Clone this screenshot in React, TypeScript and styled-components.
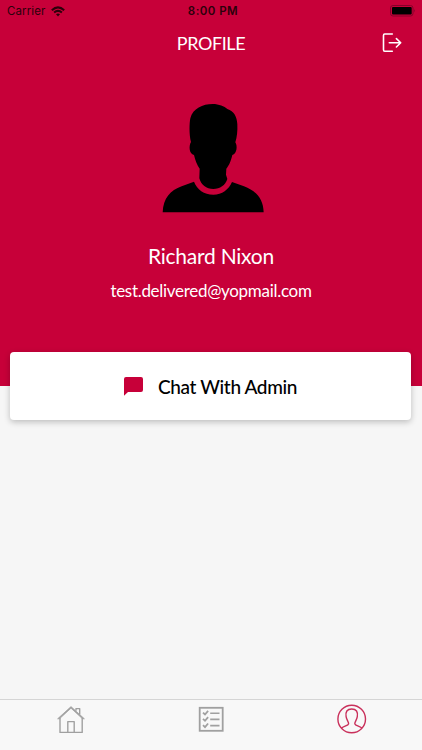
import React from "react";
import styled, { createGlobalStyle } from "styled-components";

const GlobalStyle = createGlobalStyle`
  * { box-sizing: border-box; }
  body { margin: 0; background: #f6f6f6; font-family: Lato, sans-serif; }
`;

const Screen = styled.main`
  width: 422px;
  height: 750px;
  display: flex;
  flex-direction: column;
  background: #f6f6f6;
  overflow: hidden;
`;

const Hero = styled.section`
  height: 386px;
  flex: none;
  display: flex;
  flex-direction: column;
  background: #c70039;
`;

const StatusBar = styled.div`
  height: 22px;
  flex: none;
  display: grid;
  grid-template-columns: 1fr auto 1fr;
  align-items: center;
  padding: 0 6px 0 7px;
  font-family: Inter, sans-serif;
  font-size: 11.5px;
  color: #2c000b;
`;

const Carrier = styled.span`
  display: flex;
  align-items: center;
  gap: 6px;
  letter-spacing: 0.1px;
`;

const Clock = styled.span`
  padding-left: 3px;
  font-weight: 600;
  font-size: 11.5px;
  letter-spacing: 0.45px;
`;

const BatterySlot = styled.span`
  display: flex;
  justify-content: flex-end;
`;

const NavBar = styled.header`
  height: 42px;
  flex: none;
  display: grid;
  grid-template-columns: 1fr auto 1fr;
  align-items: center;
  padding: 0 20px;
`;

const Title = styled.h1`
  grid-column: 2;
  margin: 0;
  padding-bottom: 1px;
  font-size: 18px;
  font-weight: 400;
  letter-spacing: -0.4px;
  color: #fff;
`;

const LogoutButton = styled.button`
  justify-self: end;
  display: flex;
  padding: 0;
  border: 0;
  background: none;
`;

const Person = styled.div`
  display: flex;
  flex-direction: column;
  align-items: center;
  padding-top: 31px;
  color: #fff;
`;

const Name = styled.h2`
  margin: 23px 0 0;
  font-size: 21px;
  line-height: 26px;
  font-weight: 400;
  letter-spacing: -0.25px;
`;

const Email = styled.p`
  margin: 11px 0 0;
  font-size: 17px;
  line-height: 22px;
  letter-spacing: -0.3px;
`;

const ChatCard = styled.button`
  margin: -34px 11px 0 10px;
  height: 68px;
  flex: none;
  display: flex;
  align-items: center;
  justify-content: center;
  gap: 15px;
  padding: 1px 0 0;
  border: 0;
  border-radius: 4px;
  background: #fff;
  box-shadow: 0 2px 6px rgba(0, 0, 0, 0.24);
  color: #000;
  font: 500 19px/24px Lato, sans-serif;
  letter-spacing: -0.35px;
`;

const TabBar = styled.nav`
  margin-top: auto;
  height: 51px;
  display: grid;
  grid-template-columns: repeat(3, 1fr);
  border-top: 1px solid #d5d5d5;
  background: #f8f8f8;
`;

const Tab = styled.button<{ $active?: boolean }>`
  display: flex;
  justify-content: center;
  align-items: flex-start;
  padding: 4px 0 0;
  border: 0;
  background: none;
  color: ${(p) => (p.$active ? "#c9305b" : "#a0a0a0")};
`;

const WifiIcon = () => (
  <svg width="14" height="11" viewBox="0 0 14 11" fill="none" stroke="currentColor" strokeWidth="2">
    <path d="M.8 4.2Q7-1.4 13.2 4.2M3.1 6.6Q7 3.2 10.9 6.6" />
    <path d="M5 8.3Q7 6.8 9 8.3L7 10.4Z" fill="currentColor" stroke="none" />
  </svg>
);

const BatteryIcon = () => (
  <svg width="26" height="12" viewBox="0 0 26 12">
    <rect x=".5" y=".5" width="22.5" height="10.5" rx="2.5" fill="none" stroke="#86002a" />
    <rect x="2" y="2" width="19.7" height="7.5" rx="1" fill="#000" />
    <path d="M24 4Q25.6 5.7 24 7.5Z" fill="#86002a" />
  </svg>
);

const LogoutIcon = () => (
  <svg width="20" height="20" viewBox="0 0 20 20" fill="none" stroke="#fff" strokeWidth="1.6" strokeLinecap="round" strokeLinejoin="round">
    <path d="M10.3 1H2.7Q1.5 1 1.5 2.5V16.7Q1.5 18.2 2.7 18.2H10.3M7.3 9.8H18.6M14.4 5.6L18.7 9.8L14.4 14" />
  </svg>
);

const AvatarPicture = () => (
  <svg width="130" height="125" viewBox="-12 0 390 375" fill="#000">
    <path d="M123 141C117 118 118 84 121 70C129 40 158 27 188 27C207 27 223 34 232 42C252 48 261 65 262 88C263 108 261 126 256 142C263 152 261 177 247 180C242 201 237 211 229 221L228 239L232 252C226 271 210 282 190 282C169 282 153 270 148 250L149 221C141 209 136 197 132 180C117 177 116 152 123 141Z" />
    <path d="M38 352C40 309 61 286 95 274L132 260C141 283 162 299 190 299C216 299 236 284 246 261L282 274C318 288 340 311 341 352Z" />
  </svg>
);

const ChatIcon = () => (
  <svg width="19" height="19" viewBox="0 0 19 19" fill="#c70039">
    <path d="M2 0H17Q19 0 19 2V13Q19 15 17 15H4L0 18.7V2Q0 0 2 0Z" />
  </svg>
);

const HomeIcon = () => (
  <svg width="30" height="30" viewBox="0 0 30 30" fill="none" stroke="currentColor" strokeWidth="1.4" strokeLinejoin="round">
    <path d="M5 14V28.4H27.2V14M12.8 28.2V17.6H19.2V28.2M21 6.7V4.6H24.7V10.4" />
    <path fill="currentColor" strokeWidth=".7" d="M2.6 14.8H4.5L16 4.2L27.5 14.8H29.4L16 2.6Z" />
  </svg>
);

const TasksIcon = () => (
  <svg width="26" height="30" viewBox="0 0 26 30" fill="none" stroke="currentColor">
    <rect x="1.7" y="3.8" width="23" height="23" strokeWidth="1.8" />
    <path strokeWidth="1.8" d="M5 8.6L7 10.5L10.1 6.9M5 14.9L7 16.8L10.1 13.2M5 21.2L7 23.1L10.1 19.5" />
    <path strokeWidth="1.6" d="M12.2 9.2H21.5M12.2 15.4H21.5M12.2 21.6H21.5" />
  </svg>
);

const ProfileIcon = () => (
  <svg width="30" height="30" viewBox="0 0 30 30" fill="none" stroke="currentColor" strokeWidth="1.4">
    <circle cx="14.7" cy="15" r="13.8" />
    <path d="M4.4 24.2C6 22.2 11.2 21.8 11.6 19.8C11.8 18 9.6 16 9.1 12.7C8.3 7.7 10 5 14.7 5S21.1 7.7 20.3 12.7C19.8 16 17.6 18 17.8 19.8C18.2 21.8 23.4 22.2 25 24.2" />
  </svg>
);

export default function App() {
  return (
    <>
      <GlobalStyle />
      <Screen>
        <Hero>
          <StatusBar>
            <Carrier>Carrier <WifiIcon /></Carrier>
            <Clock>8:00 PM</Clock>
            <BatterySlot><BatteryIcon /></BatterySlot>
          </StatusBar>
          <NavBar>
            <Title>PROFILE</Title>
            <LogoutButton aria-label="Log out"><LogoutIcon /></LogoutButton>
          </NavBar>
          <Person>
            <AvatarPicture />
            <Name>Richard Nixon</Name>
            <Email>test.delivered@yopmail.com</Email>
          </Person>
        </Hero>
        <ChatCard><ChatIcon />Chat With Admin</ChatCard>
        <TabBar>
          <Tab aria-label="Home"><HomeIcon /></Tab>
          <Tab aria-label="Tasks"><TasksIcon /></Tab>
          <Tab aria-label="Profile" $active><ProfileIcon /></Tab>
        </TabBar>
      </Screen>
    </>
  );
}
